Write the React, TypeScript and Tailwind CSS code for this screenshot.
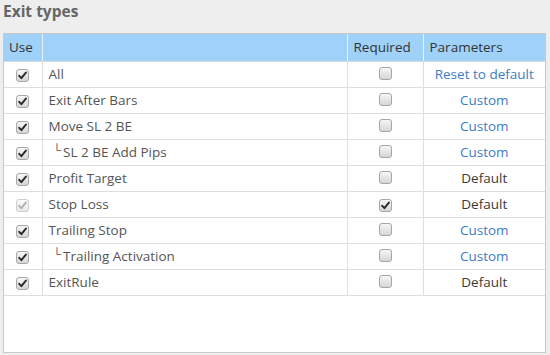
import React from 'react'

type Row = {
    name: string
    sub?: boolean
    use: boolean
    useDisabled?: boolean
    required: boolean
    params: string
    link?: boolean
}

const rows: Row[] = [
    { name: 'All', use: true, required: false, params: 'Reset to default', link: true },
    { name: 'Exit After Bars', use: true, required: false, params: 'Custom', link: true },
    { name: 'Move SL 2 BE', use: true, required: false, params: 'Custom', link: true },
    { name: 'SL 2 BE Add Pips', sub: true, use: true, required: false, params: 'Custom', link: true },
    { name: 'Profit Target', use: true, required: false, params: 'Default' },
    { name: 'Stop Loss', use: true, useDisabled: true, required: true, params: 'Default' },
    { name: 'Trailing Stop', use: true, required: false, params: 'Custom', link: true },
    { name: 'Trailing Activation', sub: true, use: true, required: false, params: 'Custom', link: true },
    { name: 'ExitRule', use: true, required: false, params: 'Default' },
]

function Checkbox({ checked, disabled }: { checked: boolean; disabled?: boolean }) {
    return (
        <span
            className={
                disabled
                    ? 'inline-flex w-[13px] h-[13px] items-center justify-center rounded-[3px] border border-[#cfcfcf] bg-gradient-to-b from-[#fafafa] to-[#e8e8e8]'
                    : 'inline-flex w-[13px] h-[13px] items-center justify-center rounded-[3px] border border-[#a6a6a6] bg-gradient-to-b from-[#f6f6f6] to-[#d6d6d6]'
            }
        >
            {checked && (
                <svg width="9" height="9" viewBox="0 0 9 9">
                    <path
                        d="M1.2 4.8 L3.4 7.2 L7.9 1.6"
                        fill="none"
                        stroke={disabled ? '#b0b0b0' : '#2a2a2a'}
                        strokeWidth="1.9"
                        strokeLinecap="round"
                        strokeLinejoin="round"
                    />
                </svg>
            )}
        </span>
    )
}

export default function App() {
    return (
        <div className="w-[550px] h-[355px] bg-[#eeeeee] font-['Open_Sans',sans-serif] px-[3px]">
            <div className="h-[33px] pt-[1px] text-[15.5px] leading-[21px] font-bold text-[#666666]">
                Exit types
            </div>
            <div className="w-[543px] h-[320px] bg-white border border-[#c9c9c9]">
                <table className="w-full table-fixed border-collapse text-[13.5px]">
                    <colgroup>
                        <col className="w-[38px]" />
                        <col className="w-[305px]" />
                        <col className="w-[76px]" />
                        <col />
                    </colgroup>
                    <thead>
                        <tr className="h-[27px] bg-[#a0d2f9] text-[#333333]">
                            <th className="font-normal text-left pl-[5px] border-b border-[#dadada]">Use</th>
                            <th className="font-normal text-left border-l border-b border-l-[#e6f3fd] border-b-[#dadada]"></th>
                            <th className="font-normal text-left pl-[6px] border-l border-b border-l-[#e6f3fd] border-b-[#dadada]">Required</th>
                            <th className="font-normal text-left pl-[6px] border-l border-b border-l-[#e6f3fd] border-b-[#dadada]">Parameters</th>
                        </tr>
                    </thead>
                    <tbody>
                        {rows.map((r) => (
                            <tr key={r.name} className="h-[26px] border-b border-[#dedede] text-[#555555]">
                                <td className="text-center align-middle pt-[3px]">
                                    <Checkbox checked={r.use} disabled={r.useDisabled} />
                                </td>
                                <td className="border-l border-[#dedede] pl-[6px] pt-[1px]">
                                    {r.sub ? (
                                        <span>
                                            <span className="relative top-[-3px] text-[12px] pl-[4px] pr-[2px]">└</span>
                                            {r.name}
                                        </span>
                                    ) : (
                                        r.name
                                    )}
                                </td>
                                <td className="border-l border-[#dedede] text-center pt-[3px]">
                                    <Checkbox checked={r.required} />
                                </td>
                                <td
                                    className={
                                        r.link
                                            ? 'border-l border-[#dedede] text-center pt-[1px] text-[#3b7dc4]'
                                            : 'border-l border-[#dedede] text-center pt-[1px] text-[#3a3a3a]'
                                    }
                                >
                                    {r.params}
                                </td>
                            </tr>
                        ))}
                    </tbody>
                </table>
            </div>
        </div>
    )
}
